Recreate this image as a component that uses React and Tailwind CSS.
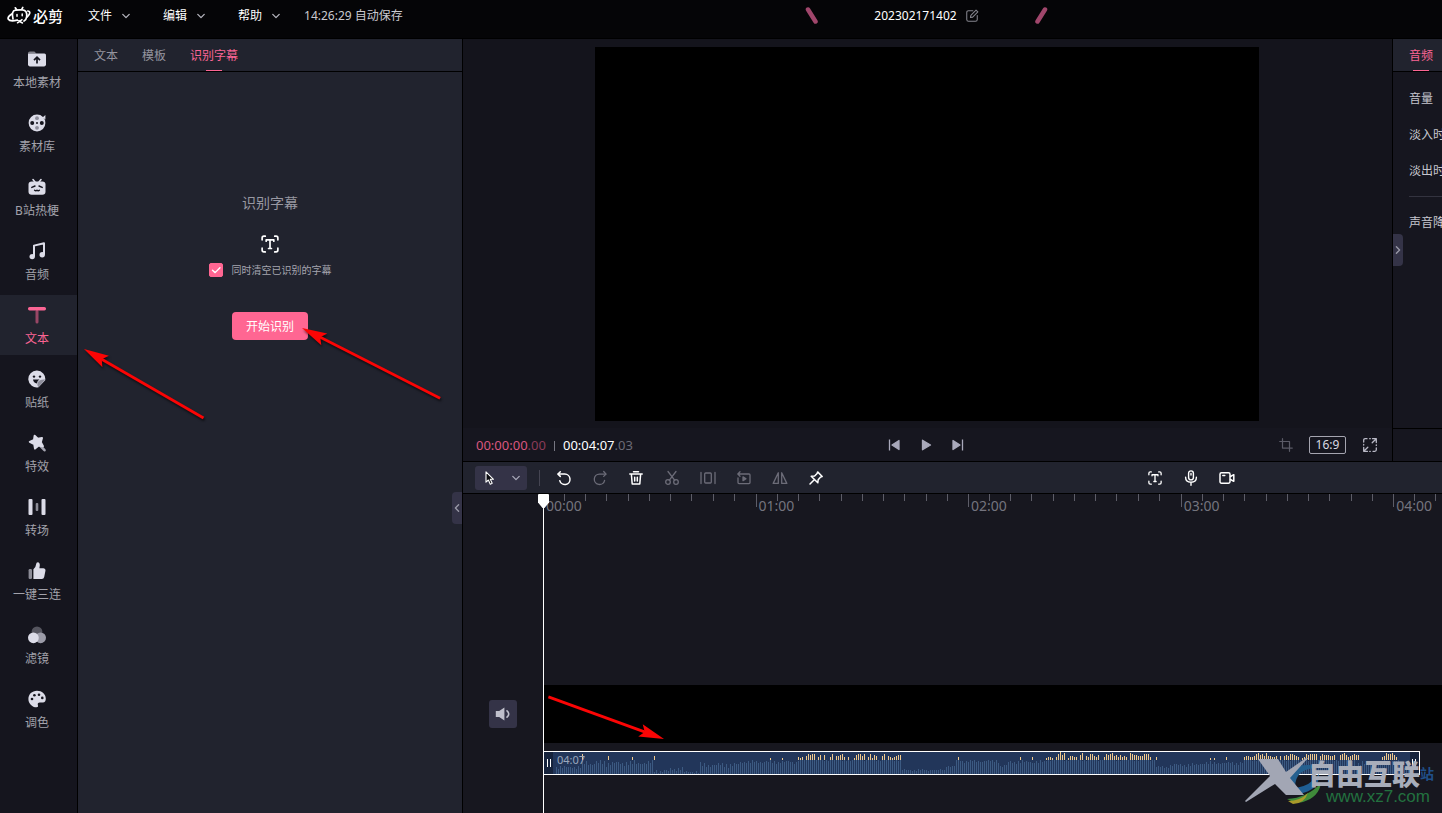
import { useState } from 'react';

const MENUS = ['文件', '编辑', '帮助'];
const TABS = ['文本', '模板', '识别字幕'];

// timeline scale: the 04:07 clip takes 875px
const CLIP_WIDTH = 875;
const MINUTE = (CLIP_WIDTH / 247) * 60;
const MINUTES = ['00:00', '01:00', '02:00', '03:00', '04:00'];

// [from, to, average bar height, spread]
const LEVELS = [
  [12, 38, 7, 2],
  [38, 64, 11, 4],
  [64, 110, 11, 3],
  [110, 126, 3, 2],
  [126, 140, 5, 2],
  [140, 156, 2, 2],
  [156, 196, 9, 3],
  [196, 254, 12, 2],
  [254, 358, 14, 1],
  [358, 402, 4, 1],
  [402, 412, 8, 1],
  [412, 456, 13, 2],
  [456, 464, 8, 2],
  [464, 502, 12, 2],
  [502, 612, 14, 1],
  [612, 626, 7, 1],
  [626, 656, 9, 2],
  [656, 700, 11, 2],
  [700, 812, 14, 1],
  [812, 838, 10, 3],
  [838, 856, 13, 1],
  [856, 866, 8, 2],
];

// one digit per bar, height of the part above the threshold
const PEAKS = [
  [38, '6'],
  [64, '4'],
  [88, '3'],
  [110, '4'],
  [226, '20000020'],
  [254, '323046566035050036044563030025664603625400460432345500'],
  [414, '3'],
  [476, '3000003'],
  [502, '233203685702443305704366435003656745353430765544466630030'],
  [666, '2020000030'],
  [700, '3443346756474433404045466543023656666046555445005675345655'],
  [838, '34766753'],
];

const bars = LEVELS.flatMap(([from, to, avg, spread]) => {
  const out = [];
  for (let x = from; x < to; x += 2) {
    const h = Math.round(avg + Math.sin(x * 1.7) * spread * 0.6 + Math.sin(x * 0.37) * spread * 0.4);
    out.push({ x, h: Math.max(1, Math.min(14, h)) });
  }
  return out;
});

const peaks = PEAKS.flatMap(([from, digits]) =>
  [...digits].map((d, i) => ({ x: from + i * 2, h: Number(d) })).filter((p) => p.h > 0)
);

function Stroke({ size = 16, width = 1.3, className, children }) {
  return (
    <svg
      width={size}
      height={size}
      viewBox="0 0 16 16"
      fill="none"
      stroke="currentColor"
      strokeWidth={width}
      strokeLinecap="round"
      strokeLinejoin="round"
      className={className}
      aria-hidden="true"
    >
      {children}
    </svg>
  );
}

function Solid({ children }) {
  return (
    <svg width="20" height="20" viewBox="0 0 20 20" fill="currentColor" aria-hidden="true">
      {children}
    </svg>
  );
}

function Chevron({ className }) {
  return (
    <svg width="8" height="8" viewBox="0 0 8 8" fill="none" stroke="currentColor" strokeWidth="1.3" strokeLinecap="round" strokeLinejoin="round" className={className} aria-hidden="true">
      <path d="M.8 2.4 4 5.6l3.2-3.2" />
    </svg>
  );
}

function ScanTextIcon({ size = 18 }) {
  return (
    <Stroke size={size} width={1.5}>
      <path d="M1 4.3V2.6Q1 1 2.6 1h1.2M12.2 1h1.2Q15 1 15 2.6v1.7M15 11.7v1.7q0 1.6-1.6 1.6h-1.2M3.8 15H2.6Q1 15 1 13.4v-1.7" />
      <path d="M4.6 5.5V4.3h6.8v1.2M8 4.3v7.6M6.7 12h2.6" />
    </Stroke>
  );
}

const NAV = [
  {
    label: '本地素材',
    icon: (
      <Solid>
        <path d="M1 4.2Q1 2.4 2.8 2.4h4.6l2 2H1z" opacity=".55" />
        <path d="M1 4.6h16.4Q19 4.6 19 6.2v9.4Q19 17.4 17.2 17.4H2.8Q1 17.4 1 15.6z" />
        <path d="M10 14.4V8.6M7 11.2l3-3 3 3" fill="none" stroke="#15151e" strokeWidth="1.7" />
      </Solid>
    ),
  },
  {
    label: '素材库',
    icon: (
      <Solid>
        <circle cx="10" cy="10" r="8.4" />
        <path d="M15.5 4.5 18.4 2v4.5z" />
        <g fill="#15151e">
          <circle cx="5.2" cy="10" r="2" />
          <circle cx="14.8" cy="10" r="2" />
          <circle cx="10" cy="10" r="1" />
        </g>
        <g fill="#8e8e9b">
          <circle cx="10" cy="5.2" r="1.9" />
          <circle cx="10" cy="14.8" r="1.9" />
        </g>
      </Solid>
    ),
  },
  {
    label: 'B站热梗',
    icon: (
      <Solid>
        <path d="M6 2.5 8 5M14 2.5 12 5" stroke="currentColor" strokeWidth="1.6" strokeLinecap="round" />
        <rect x="1.5" y="4.4" width="17" height="13.4" rx="3.2" />
        <path d="m4.8 10.4 3.2-1.4M15.2 10.4 12 9M7.6 13.2q1.2 1 2.4 0 1.2 1 2.4 0" fill="none" stroke="#15151e" strokeWidth="1.4" strokeLinecap="round" />
      </Solid>
    ),
  },
  {
    label: '音频',
    icon: (
      <Solid>
        <path d="M7 15.5V4.6l10-2.4v11.6" fill="none" stroke="currentColor" strokeWidth="2" strokeLinejoin="round" />
        <circle cx="5.2" cy="15.6" r="2.7" />
        <circle cx="15.2" cy="13.8" r="2.7" />
      </Solid>
    ),
  },
  {
    label: '文本',
    icon: (
      <Solid>
        <rect x="8.5" y="5" width="3" height="13.4" rx="1.5" opacity=".55" />
        <rect x="1" y="2" width="18" height="3.4" rx="1.6" />
      </Solid>
    ),
  },
  {
    label: '贴纸',
    icon: (
      <Solid>
        <path d="M10 1.6a8.4 8.4 0 1 0 1.5 16.6l6.7-7A8.4 8.4 0 0 0 10 1.6z" />
        <path d="M18.3 10.6q-6-.6-7.8 3.4-.8 2 .9 4.2z" fill="#8e8e9b" />
        <g fill="#15151e">
          <circle cx="7" cy="7.6" r="1.2" />
          <circle cx="13" cy="7.6" r="1.2" />
          <path d="M6 10.6h6.5q-2.2 1.2-2.6 4Q6.5 14 6 10.6z" />
        </g>
      </Solid>
    ),
  },
  {
    label: '特效',
    icon: (
      <Solid>
        <path d="m13.5 13 4 4.2" stroke="#a5a5b1" strokeWidth="2.6" strokeLinecap="round" />
        <path
          d="m7.6 2.8 3.2 3 4.2-.8-1.2 4.2 2.2 4-4.4-.6-3.6 3-.8-4.6-4.4-2.2 4.2-1.8z"
          stroke="currentColor"
          strokeWidth="2"
          strokeLinejoin="round"
        />
      </Solid>
    ),
  },
  {
    label: '转场',
    icon: (
      <Solid>
        <rect x="1.5" y="2" width="4" height="16" rx="1" />
        <rect x="8.7" y="6" width="2.6" height="8" rx="1" opacity=".6" />
        <rect x="14.5" y="2" width="4" height="16" rx="1" />
      </Solid>
    ),
  },
  {
    label: '一键三连',
    icon: (
      <Solid>
        <rect x="1.6" y="8" width="3.4" height="10" rx="1.2" opacity=".6" />
        <path d="M6.4 8.2q2.4-1.6 2.7-5 .2-2 1.7-2 2.2.2 2 3.4l-.4 2.6h4.1q2.3.2 2 2.3l-1.3 6.6Q16.7 18 14.9 18H6.4z" />
      </Solid>
    ),
  },
  {
    label: '滤镜',
    icon: (
      <Solid>
        <circle cx="10" cy="6.8" r="5.4" fill="#55555f" />
        <circle cx="13.6" cy="12.8" r="5.4" fill="#9b9ba8" />
        <circle cx="6.4" cy="12.8" r="5.4" />
      </Solid>
    ),
  },
  {
    label: '调色',
    icon: (
      <Solid>
        <path d="M10 1.8c-5 0-8.6 3.6-8.6 8.1s3.6 8.3 8.1 8.3c1.5 0 1.8-1 1.4-2-.6-1.7.3-2.7 1.8-2.7h3.2c1.9 0 2.9-1.5 2.9-3.7 0-4.5-3.9-8-8.8-8z" />
        <g fill="#15151e">
          <circle cx="5" cy="10" r="1.3" />
          <circle cx="7.4" cy="6.2" r="1.3" />
          <circle cx="12" cy="5.7" r="1.3" />
          <circle cx="15.3" cy="8.9" r="1.3" />
        </g>
      </Solid>
    ),
  },
];

const TOOLS = [
  {
    label: '撤销',
    on: true,
    icon: (
      <Stroke width={1.5}>
        <path d="M2.2 4.1h6.6a5.2 5.2 0 1 1-5 6.6" />
        <path d="M4.3 1.8 2 4.1l2.3 2.3" />
      </Stroke>
    ),
  },
  {
    label: '重做',
    icon: (
      <Stroke>
        <path d="M13.8 4.1H7.4a5.2 5.2 0 1 0 5.2 6.2" />
        <path d="M11.7 1.5 14 4.1l-2.3 2.3" />
      </Stroke>
    ),
  },
  {
    label: '删除',
    on: true,
    icon: (
      <Stroke width={1.5}>
        <path d="M1.8 4.1h12.4M5.5 1.8h5M3.4 4.4l.8 9.6h7.6l.8-9.6M6.7 7.3v3.6M9.3 7.3v3.6" />
      </Stroke>
    ),
  },
  {
    label: '剪刀',
    icon: (
      <Stroke>
        <path d="M4 1.5 10.8 10.3M12 1.5 5.2 10.3" />
        <circle cx="4" cy="12" r="2.3" />
        <circle cx="12" cy="12" r="2.3" />
      </Stroke>
    ),
  },
  {
    label: '分割',
    icon: (
      <Stroke>
        <path d="M1 2.5v11M15 2.5v11" />
        <rect x="4.7" y="3" width="6.6" height="10" rx="1" />
      </Stroke>
    ),
  },
  {
    label: '倒放',
    icon: (
      <Stroke>
        <path d="M2 4h11q1 0 1 1v7.6q0 1-1 1H3q-1 0-1-1V8M4 1.8 1.8 4 4 6.2" />
        <path d="m7 6.8 3 1.9-3 1.9z" fill="currentColor" />
      </Stroke>
    ),
  },
  {
    label: '镜像',
    icon: (
      <Stroke>
        <path d="M6.3 2.8v10.6H1.2zM9.7 2.8v10.6h5.1z" />
      </Stroke>
    ),
  },
  {
    label: '吸附',
    on: true,
    icon: (
      <Stroke width={1.5}>
        <path d="M9.6 1.9 14.2 6.5l-1.6.6-2.4 2.6-.4 3.1-6.6-6.6 3.4-.2 2.5-2.5zM6 9.9 2 14" />
      </Stroke>
    ),
  },
];

function Header() {
  return (
    <header className="flex h-[39px] shrink-0 border-b border-black bg-[#050507] pb-[7px] text-[12px] text-white">
      <div className="flex w-[463px] shrink-0 items-center pl-[7px]">
        <div className="flex w-[81px] items-center gap-[2px]">
          <svg width="24" height="20" viewBox="0 0 24 20" fill="none" stroke="#fff" strokeWidth="1.7" strokeLinecap="round" strokeLinejoin="round" aria-hidden="true">
            <path d="M8.3 1.8 9.6 3.8M15.8 1.4 14.6 3.6M6 13Q4 4.8 8.5 4.2q3.5-.5 7-.3 4.9.4 4.2 6.8-.3 3-2.7 4.3" />
            <path d="M4.8 8Q.4 10.8 1.2 13q1.6 3 9 1.2M20.8 5q3 .6 1.4 3.4-.8 1.4-2.3 2.8" />
            <path d="M10 8.4v1.8M15.2 8v1.8M10.5 14.3l5 2.7M15 13.6l-4.5 3.2" strokeWidth="1.5" />
          </svg>
          <span className="text-[15px] leading-5 font-medium">必剪</span>
        </div>
        <nav className="flex gap-[33px]">
          {MENUS.map((m) => (
            <button key={m} className="flex items-center gap-[10px]">
              {m}
              <Chevron className="text-[#b5b5bd]" />
            </button>
          ))}
        </nav>
        <span className="ml-6 text-[#c9c9cf]">14:26:29 自动保存</span>
      </div>
      <div className="flex flex-1 items-center justify-center gap-[55px]">
        <svg width="14" height="18" viewBox="0 0 14 18" stroke="#a0466b" strokeWidth="4.5" strokeLinecap="round" aria-hidden="true">
          <path d="M3 2.5 10.5 14.5" />
        </svg>
        <div className="flex items-center gap-2">
          <span>202302171402</span>
          <button aria-label="重命名" className="text-[#85858e]">
            <Stroke size={14} width={1.2}>
              <path d="M9 2H4Q2 2 2 4v8q0 2 2 2h8q2 0 2-2V7.5M6.2 9.8l.5-2.6L12.6 1.3l2.1 2.1-5.9 5.9z" />
            </Stroke>
          </button>
        </div>
        <svg width="14" height="18" viewBox="0 0 14 18" stroke="#a0466b" strokeWidth="4.5" strokeLinecap="round" aria-hidden="true">
          <path d="M11 2.5 3.5 14.5" />
        </svg>
      </div>
      <div className="w-[52px] shrink-0" />
    </header>
  );
}

function Sidebar({ active, onSelect }) {
  return (
    <nav className="flex w-[78px] shrink-0 flex-col gap-1 border-r border-black bg-[#15151e]">
      {NAV.map(({ label, icon }) => (
        <button
          key={label}
          onClick={() => onSelect(label)}
          className={
            label === active
              ? 'flex h-[60px] flex-col items-center gap-1 bg-[#21232e] pr-[3px] pt-[10px] text-[#fb6594]'
              : 'flex h-[60px] flex-col items-center gap-1 pr-[3px] pt-[10px] text-[#dcdce8]'
          }
        >
          {icon}
          <span className={label === active ? 'text-[12px] leading-5' : 'text-[12px] leading-5 text-[#a2a2ab]'}>{label}</span>
        </button>
      ))}
    </nav>
  );
}

function Tab({ label, active, onClick }) {
  return (
    <button
      onClick={onClick}
      className={active ? 'relative h-full shrink-0 pt-[2px] text-[#fb6594]' : 'h-full shrink-0 pt-[2px] text-[#94949e]'}
    >
      {label}
      {active && <span className="absolute inset-x-0 bottom-0 mx-auto h-px w-4 bg-[#fb6594]" />}
    </button>
  );
}

function TextPanel() {
  const [tab, setTab] = useState('识别字幕');
  const [clear, setClear] = useState(true);
  return (
    <section className="relative flex w-[385px] shrink-0 flex-col border-r border-black bg-[#21232e]">
      <div className="flex h-[33px] gap-6 border-b border-black pl-4 text-[12px]">
        {TABS.map((t) => (
          <Tab key={t} label={t} active={t === tab} onClick={() => setTab(t)} />
        ))}
      </div>
      <div className="flex flex-col items-center pt-[121px]">
        <h2 className="text-[14px] leading-5 text-[#9898a2]">识别字幕</h2>
        <span className="mt-[22px] text-white">
          <ScanTextIcon />
        </span>
        <label className="mt-[10px] flex items-center gap-[9px] text-[10px] leading-[14px] text-[#a5a5ae]">
          <span className="grid size-[14px]">
            <input
              type="checkbox"
              checked={clear}
              onChange={(e) => setClear(e.target.checked)}
              className="col-start-1 row-start-1 size-[14px] appearance-none rounded-[2px] border border-[#ff6692] checked:bg-[#ff6692]"
            />
            {clear && (
              <Stroke size={14} width={1.6} className="pointer-events-none col-start-1 row-start-1 text-white">
                <path d="m4 8.2 3 2.8 5.5-5.5" />
              </Stroke>
            )}
          </span>
          同时清空已识别的字幕
        </label>
        <button className="mt-[35px] h-7 w-[76px] rounded-[4px] bg-[#ff6692] pt-[2px] text-[12px] text-white">开始识别</button>
      </div>
      <button aria-label="收起面板" className="absolute right-0 top-[453px] flex h-8 w-[10px] items-center justify-center rounded-l-[4px] bg-[#343347] text-[#9a9aa8]">
        <Chevron className="rotate-90" />
      </button>
    </section>
  );
}

function Player() {
  return (
    <section className="flex min-w-0 flex-1 flex-col bg-[#14141c]">
      <div className="flex flex-1 justify-center pr-[2px] pt-2">
        <div className="h-[374px] w-[664px] bg-black" />
      </div>
      <div className="grid h-[33px] grid-cols-[1fr_auto_1fr] items-center bg-[#16161f] pl-3 pr-[14px] text-[13px]">
        <div className="flex items-center gap-2 pl-px pt-[2px]">
          <span className="text-[#d9567f]">
            00:00:00<span className="text-[#8a3b58]">.00</span>
          </span>
          <span className="h-[10px] w-px bg-[#777782]" />
          <span className="text-white">
            00:04:07<span className="text-[#6b6b76]">.03</span>
          </span>
        </div>
        <div className="flex items-center gap-4 pr-[2px] text-[#a9a9bb]">
          <button aria-label="上一帧" className="size-4">
            <svg width="16" height="16" viewBox="0 0 16 16" fill="currentColor" stroke="currentColor" strokeLinejoin="round">
              <path d="M3.5 2.5v11M13 3.5v9L6 8z" strokeWidth="1.3" />
            </svg>
          </button>
          <button aria-label="播放" className="size-4">
            <svg width="16" height="16" viewBox="0 0 16 16" fill="currentColor" stroke="currentColor" strokeLinejoin="round">
              <path d="M4.5 3.2v9.6l8-4.8z" strokeWidth="1.3" />
            </svg>
          </button>
          <button aria-label="下一帧" className="size-4">
            <svg width="16" height="16" viewBox="0 0 16 16" fill="currentColor" stroke="currentColor" strokeLinejoin="round">
              <path d="M12.5 2.5v11M3 3.5v9L10 8z" strokeWidth="1.3" />
            </svg>
          </button>
        </div>
        <div className="flex items-center justify-end gap-4 text-[#b9b9c6]">
          <button aria-label="裁剪" className="text-[#5a5a66]">
            <Stroke size={14} width={1.4}>
              <path d="M4 .8v10.7h11.2M.8 4h11.2v11.2" />
            </Stroke>
          </button>
          <button className="h-[18px] w-[37px] rounded-[2px] border border-[#a5a5b0] text-[12px] leading-4 text-[#dadae2]">16:9</button>
          <button aria-label="全屏" className="size-4">
            <Stroke width={1.3}>
              <path d="M1.7 5V3.2q0-1.5 1.5-1.5H5M11 14.3h1.8q1.5 0 1.5-1.5V11M10.5 1.7h3.8v3.8M14 2 10.2 5.8M5.5 14.3H1.7v-3.8M2 14l3.8-3.8M1.7 7.5v.6M14.3 7.8v.6M7.7 1.7h.6M7.7 14.3h.6" />
            </Stroke>
          </button>
        </div>
      </div>
    </section>
  );
}

function Inspector() {
  return (
    <aside className="relative flex w-[50px] shrink-0 flex-col overflow-hidden whitespace-nowrap border-l border-black bg-[#16161f] text-[12px] text-[#c6c6ce]">
      <div className="flex h-[33px] border-b border-black bg-[#21232e] pl-4">
        <Tab label="音频" active />
      </div>
      <div className="flex-1 pl-4 pt-[9px] leading-9">
        <p>音量</p>
        <p>淡入时长</p>
        <p>淡出时长</p>
        <hr className="mb-2 mt-[7px] border-[#33333f]" />
        <p>声音降噪</p>
      </div>
      <div className="h-[33px] border-t border-black" />
      <button aria-label="收起属性" className="absolute left-0 top-[195px] flex h-8 w-[10px] items-center justify-center rounded-r-[4px] bg-[#343347] text-[#9a9aa8]">
        <Chevron className="-rotate-90" />
      </button>
    </aside>
  );
}

function Toolbar() {
  return (
    <div className="flex h-[33px] shrink-0 items-center border-y border-black bg-[#21232e] pl-3 pr-[205px]">
      <button aria-label="选择工具" className="flex h-6 w-[52px] items-center justify-between rounded-[3px] bg-[#343347] pl-2 pr-[7px] text-[#a9a9b8]">
        <svg width="14" height="16" viewBox="0 0 14 16" fill="#0b0b10" stroke="#fff" strokeWidth="1.1" strokeLinejoin="round" aria-hidden="true">
          <path d="M3 1.8v10.4l2.4-2.2 1.9 4.2 1.9-.9-1.9-4h3.2z" />
        </svg>
        <Chevron />
      </button>
      <span className="ml-3 h-4 w-px bg-[#454552]" />
      <div className="ml-[14px] flex gap-4">
        {TOOLS.map(({ label, icon, on }) => (
          <button
            key={label}
            aria-label={label}
            disabled={!on}
            className={on ? 'flex size-5 items-center justify-center text-white' : 'flex size-5 items-center justify-center text-[#6c6c78]'}
          >
            {icon}
          </button>
        ))}
      </div>
      <div className="ml-auto flex gap-4 text-white">
        <button aria-label="识别字幕" className="flex size-5 items-center justify-center">
          <ScanTextIcon size={14} />
        </button>
        <button aria-label="录音" className="flex size-5 items-center justify-center">
          <Stroke width={1.4}>
            <rect x="5.6" y=".9" width="4.8" height="9" rx="2.4" />
            <path d="M2.6 7.3q0 5 5.4 5t5.4-5M8 12.5v2.7M8 3.5v1.5" />
          </Stroke>
        </button>
        <button aria-label="录屏" className="flex size-5 items-center justify-center">
          <Stroke width={1.5}>
            <rect x="1" y="2.8" width="10" height="10.4" rx="1.4" />
            <path d="M11.5 6.5 14.8 4.7v6.6l-3.3-1.8M3.8 5.6h2" />
          </Stroke>
        </button>
      </div>
    </div>
  );
}

function Ruler() {
  return (
    <div className="flex h-6 overflow-hidden text-[14px] leading-6 text-[#74747e]">
      {MINUTES.map((label) => (
        <div key={label} className="relative shrink-0 pl-[3px]" style={{ width: MINUTE }}>
          <svg className="absolute left-0 top-0" width="214" height="14" stroke="#5d5d68" aria-hidden="true">
            {Array.from({ length: 10 }, (_, i) => (
              <path key={i} d={`M${Math.floor((i * MINUTE) / 10) + 0.5} 0v${i ? 7 : 13}`} />
            ))}
          </svg>
          {label}
        </div>
      ))}
    </div>
  );
}

function AudioClip() {
  return (
    <div className="relative h-6 w-[877px] border border-white bg-[#22365a]">
      <svg className="absolute left-0 top-0" width="875" height="22" shapeRendering="crispEdges" aria-hidden="true">
        {bars.map(({ x, h }) => (
          <rect key={x} x={x} y={22 - h} width="1" height={h} fill="#3c5a82" />
        ))}
        {peaks.map(({ x, h }) => (
          <rect key={x} x={x} y={8 - h} width="1" height={h} fill="#f0c98c" />
        ))}
        <path d="M0 0h9v22H0zM866 0h9v22h-9z" fill="#16233c" />
        <path d="M3.5 7v8M6.5 7v8M868.5 7v8M871.5 7v8" stroke="#fff" />
      </svg>
      <span className="relative block pl-[13px] text-[11px] leading-4 text-[#9aa7bd]">04:07</span>
    </div>
  );
}

function Timeline() {
  return (
    <div className="relative flex min-h-0 flex-1 bg-[#17171f]">
      <div className="w-20 shrink-0 pl-[26px] pt-[206px]">
        <button aria-label="静音" className="flex size-7 items-center justify-center rounded-[3px] bg-[#343347] text-[#c0c0cc]">
          <svg width="16" height="16" viewBox="0 0 16 16" fill="currentColor" aria-hidden="true">
            <path d="M.8 5h3.4L9.4 1.5v13L4.2 11H.8z" />
            <path d="M12 4.8q3.5 3.2 0 6.4" fill="none" stroke="currentColor" strokeWidth="1.6" strokeLinecap="round" />
          </svg>
        </button>
      </div>
      <div className="min-w-0 flex-1 overflow-x-clip">
        <Ruler />
        <div className="mt-[167px] h-[58px] bg-black" />
        <div className="mt-2">
          <AudioClip />
        </div>
      </div>
      <div className="absolute inset-y-0 left-[75px] flex w-[11px] flex-col items-center">
        <svg width="11" height="14" viewBox="0 0 11 14" fill="#fff" aria-hidden="true">
          <path d="M0 1q0-1 1-1h9q1 0 1 1v7.5L6.5 14h-2L0 8.5z" />
        </svg>
        <span className="w-px flex-1 bg-white" />
      </div>
    </div>
  );
}

function Arrow({ x, y, angle, length }) {
  return (
    <g transform={`translate(${x} ${y}) rotate(${angle})`}>
      <path d={`M20 -1.4H${length}v2.8H20z`} />
      <path d="M0 0 25-6.5 20.5 0 25 6.5z" />
    </g>
  );
}

function Annotations() {
  return (
    <svg className="pointer-events-none absolute inset-0 h-full w-full fill-[#fb0505] drop-shadow-[1px_2px_1px_rgba(0,0,0,0.6)]" aria-hidden="true">
      <Arrow x={84} y={349} angle={30} length={138} />
      <Arrow x={302} y={328} angle={27} length={155} />
      <Arrow x={664} y={739} angle={200} length={123} />
    </svg>
  );
}

function Watermark() {
  return (
    <div className="pointer-events-none absolute bottom-[7px] right-[8px] flex items-end">
      <svg width="84" height="54" viewBox="0 0 84 54" className="-mr-5" aria-hidden="true">
        <path d="M40 30Q44 13 64 13q8 0 12 3-16-1-22 8-4 6-2 14-8 0-12-8z" fill="#25608f" />
        <path d="M52 36q14-2 23-14 1 16-20 20z" fill="#1f5e94" />
        <path d="M43 47q20-1 34-16-2 14-18 19-8 2-16-3z" fill="#3f8a3a" />
        <path d="M44 49q12 0 20-8-4 11-15 11z" fill="#a89a2a" />
        <path d="M14 7h20l8 13L62 6h2L46 26l14 17H42L31 32 2 50l-1-1 25-25z" fill="#a2a6b4" />
      </svg>
      <div className="flex flex-col">
        <div className="flex items-end text-[28px] font-black leading-7 text-[#a8adba]">
          自由互联
          <span className="text-[14px] font-bold leading-7 text-[#20508a]">站</span>
        </div>
        <a href="http://www.xz7.com" className="self-end pr-1 font-['Liberation_Sans',sans-serif] text-[17px] leading-[18px] text-[#23713f]">
          www.xz7.com
        </a>
      </div>
    </div>
  );
}

export default function App() {
  const [section, setSection] = useState('文本');
  return (
    <div className="relative flex h-screen flex-col overflow-hidden bg-[#15151e] font-['Noto_Sans','Noto_Sans_CJK_SC',sans-serif]">
      <Header />
      <div className="flex min-h-0 flex-1">
        <Sidebar active={section} onSelect={setSection} />
        <TextPanel />
        <main className="flex min-w-0 flex-1 flex-col">
          <div className="flex h-[422px] shrink-0">
            <Player />
            <Inspector />
          </div>
          <Toolbar />
          <Timeline />
        </main>
      </div>
      <Annotations />
      <Watermark />
    </div>
  );
}
